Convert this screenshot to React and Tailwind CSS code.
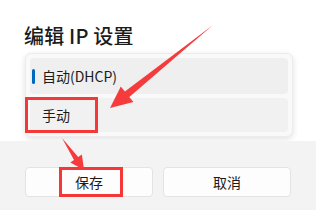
export default function App() {
  const font = { fontFamily: '"Noto Sans CJK SC", "Noto Sans", sans-serif' };

  return (
    <div className="relative w-[316px] h-[210px] overflow-hidden bg-white text-[#1b1b1b]" style={font}>
      {/* Dialog body */}
      <div className="flex flex-col h-full">
        <div className="px-6 pt-[22px]">
          <h1 className="text-[20px] leading-[28px] font-medium tracking-[0.2px]">编辑 IP 设置</h1>
        </div>

        {/* Dropdown list */}
        <div className="ml-[25px] mt-[3px] w-[268px] rounded-md bg-[#f9f9f9] p-1 flex flex-col gap-1 shadow-[0_2px_6px_rgba(0,0,0,0.12)] border border-[#ececec]">
          <div className="relative h-[36px] rounded bg-[#efefef] flex items-center pl-[12px] text-[14px]">
            <span className="absolute left-[2px] top-[11px] w-[3px] h-[15px] rounded-full bg-[#0067c0]" />
            自动(DHCP)
          </div>
          <div className="h-[34px] rounded bg-[#f1f1f1] flex items-center pl-[12px] text-[14px]">手动</div>
        </div>

        {/* Footer */}
        <div className="mt-1 flex-1 bg-[#f3f3f3] px-[25px] pt-[26px] flex gap-[10px]">
          <button className="w-[129px] h-[30px] rounded border border-[#e3e3e3] bg-[#fdfdfd] text-[14px]">保存</button>
          <button className="w-[129px] h-[30px] rounded border border-[#e3e3e3] bg-[#fdfdfd] text-[14px]">取消</button>
        </div>
      </div>

      {/* Annotation boxes */}
      <div className="absolute left-[25px] top-[97px] w-[73px] h-[36px] border-[3px] border-[#f53737]" />
      <div className="absolute left-[59px] top-[167px] w-[64px] h-[30px] border-[3px] border-[#f53737]" />

      {/* Annotation arrows */}
      <svg className="absolute left-0 top-0" width="316" height="210" viewBox="0 0 316 210">
        <polygon
          fill="#f53b3b"
          points="213,25 129.3,96.9 133.4,102 110,108 120.8,86.4 124.9,91.5"
        />
        <polygon
          fill="#f53b3b"
          points="62,138 78.2,157.1 81.9,154.5 84,170 70.3,162.5 74,159.9"
        />
      </svg>
    </div>
  );
}
